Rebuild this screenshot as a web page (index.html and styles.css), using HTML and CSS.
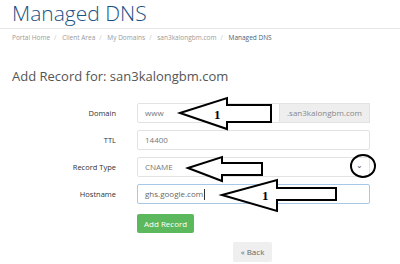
FILE: index.html
```html
<!DOCTYPE html>
<html>
<head>
<meta charset="utf-8">
<link rel="stylesheet" href="styles.css">
</head>
<body>
<div class="page">
  <h1 class="title">Managed DNS</h1>
  <div class="crumbs">
    <span>Portal Home</span><span class="sep">/</span>
    <span>Client Area</span><span class="sep">/</span>
    <span>My Domains</span><span class="sep">/</span>
    <span>san3kalongbm.com</span><span class="sep">/</span>
    <span class="active">Managed DNS</span>
  </div>
  <h2 class="subtitle">Add Record for: san3kalongbm.com</h2>
  <div class="form">
    <label class="lbl">Domain</label>
    <div class="group">
      <div class="input half">www</div>
      <div class="addon">.san3kalongbm.com</div>
    </div>
    <label class="lbl">TTL</label>
    <div class="input">14400</div>
    <label class="lbl">Record Type</label>
    <div class="input select">CNAME<span class="caret">&#8964;</span></div>
    <label class="lbl">Hostname</label>
    <div class="input focus">ghs.google.com<span class="cursor"></span></div>
    <div></div>
    <div class="actions"><span class="btn-green">Add Record</span></div>
  </div>
  <div class="back-row"><span class="btn-back">&laquo; Back</span></div>

  <svg class="overlay" width="400" height="264" viewBox="0 0 400 264">
    <g fill="#fff" stroke="#000" stroke-width="2" stroke-linejoin="miter">
      <polygon points="180,113 227,98 227,105 271,105 271,122 227,122 227,129"/>
      <polygon points="188,168 222,157 222,163 262,163 262,175 222,175 222,181"/>
      <polygon points="222,195 277,180 277,188 336,188 336,200 277,200 277,211"/>
    </g>
    <ellipse cx="363" cy="166" rx="12" ry="11" fill="none" stroke="#000" stroke-width="2"/>
    <g font-family="Liberation Serif, serif" font-size="13" font-weight="bold" fill="#000">
      <text x="214" y="119">1</text>
      <text x="262" y="200">1</text>
    </g>
  </svg>
</div>
</body>
</html>
```
FILE: styles.css
```css
html, body {
  margin: 0;
  padding: 0;
  background: #fff;
}
.page {
  position: relative;
  width: 400px;
  height: 264px;
  overflow: hidden;
  font-family: "Open Sans", sans-serif;
}
.title {
  margin: 0;
  padding: 1px 0 3px 12px;
  font-weight: 300;
  font-size: 21px;
  line-height: 24px;
  color: #1c5283;
  border-bottom: 1px solid #e8e8e8;
}
.crumbs {
  padding: 4px 0 0 12px;
  font-size: 6.5px;
  line-height: 10px;
  color: #9a9a9a;
  height: 14px;
}
.crumbs .sep {
  margin: 0 4px;
  color: #c8c8c8;
}
.crumbs .active {
  color: #4a6378;
}
.subtitle {
  margin: 0;
  padding: 22px 0 0 12px;
  line-height: 14px;
  font-size: 13px;
  font-weight: 400;
  color: #555;
}
.form {
  margin-top: 20px;
  display: grid;
  grid-template-columns: 116px 233px;
  column-gap: 21px;
  row-gap: 7px;
  align-items: center;
}
.lbl {
  text-align: right;
  font-size: 7.5px;
  color: #333;
}
.group {
  display: flex;
  height: 20px;
}
.input {
  height: 20px;
  box-sizing: border-box;
  border: 1px solid #e2e2e2;
  border-radius: 2px;
  padding-left: 7px;
  font-size: 8px;
  line-height: 18px;
  color: #777;
  position: relative;
}
.half {
  flex: 1;
  border-radius: 2px 0 0 2px;
}
.addon {
  width: 90px;
  box-sizing: border-box;
  background: #eeeeee;
  border: 1px solid #e2e2e2;
  border-left: none;
  font-size: 8px;
  line-height: 18px;
  color: #888;
  text-align: center;
}
.select .caret {
  position: absolute;
  right: 6px;
  top: -2px;
  font-size: 8px;
  color: #555;
}
.focus {
  border-color: #a7c7e7;
  color: #666;
}
.cursor {
  display: inline-block;
  width: 1px;
  height: 11px;
  background: #333;
  vertical-align: middle;
  margin-left: 1px;
}
.actions {
  display: flex;
  margin-top: 3px;
}
.btn-green {
  display: block;
  background: #5cb85c;
  color: #fff;
  font-size: 8px;
  line-height: 19px;
  padding: 0 7px;
  border-radius: 2px;
}
.back-row {
  display: flex;
  margin-top: 9px;
  padding-left: 233px;
}
.btn-back {
  display: block;
  width: 39px;
  text-align: center;
  background: #efefef;
  color: #666;
  font-size: 8px;
  line-height: 20px;
  border-radius: 2px;
}
.overlay {
  position: absolute;
  left: 0;
  top: 0;
}
```
